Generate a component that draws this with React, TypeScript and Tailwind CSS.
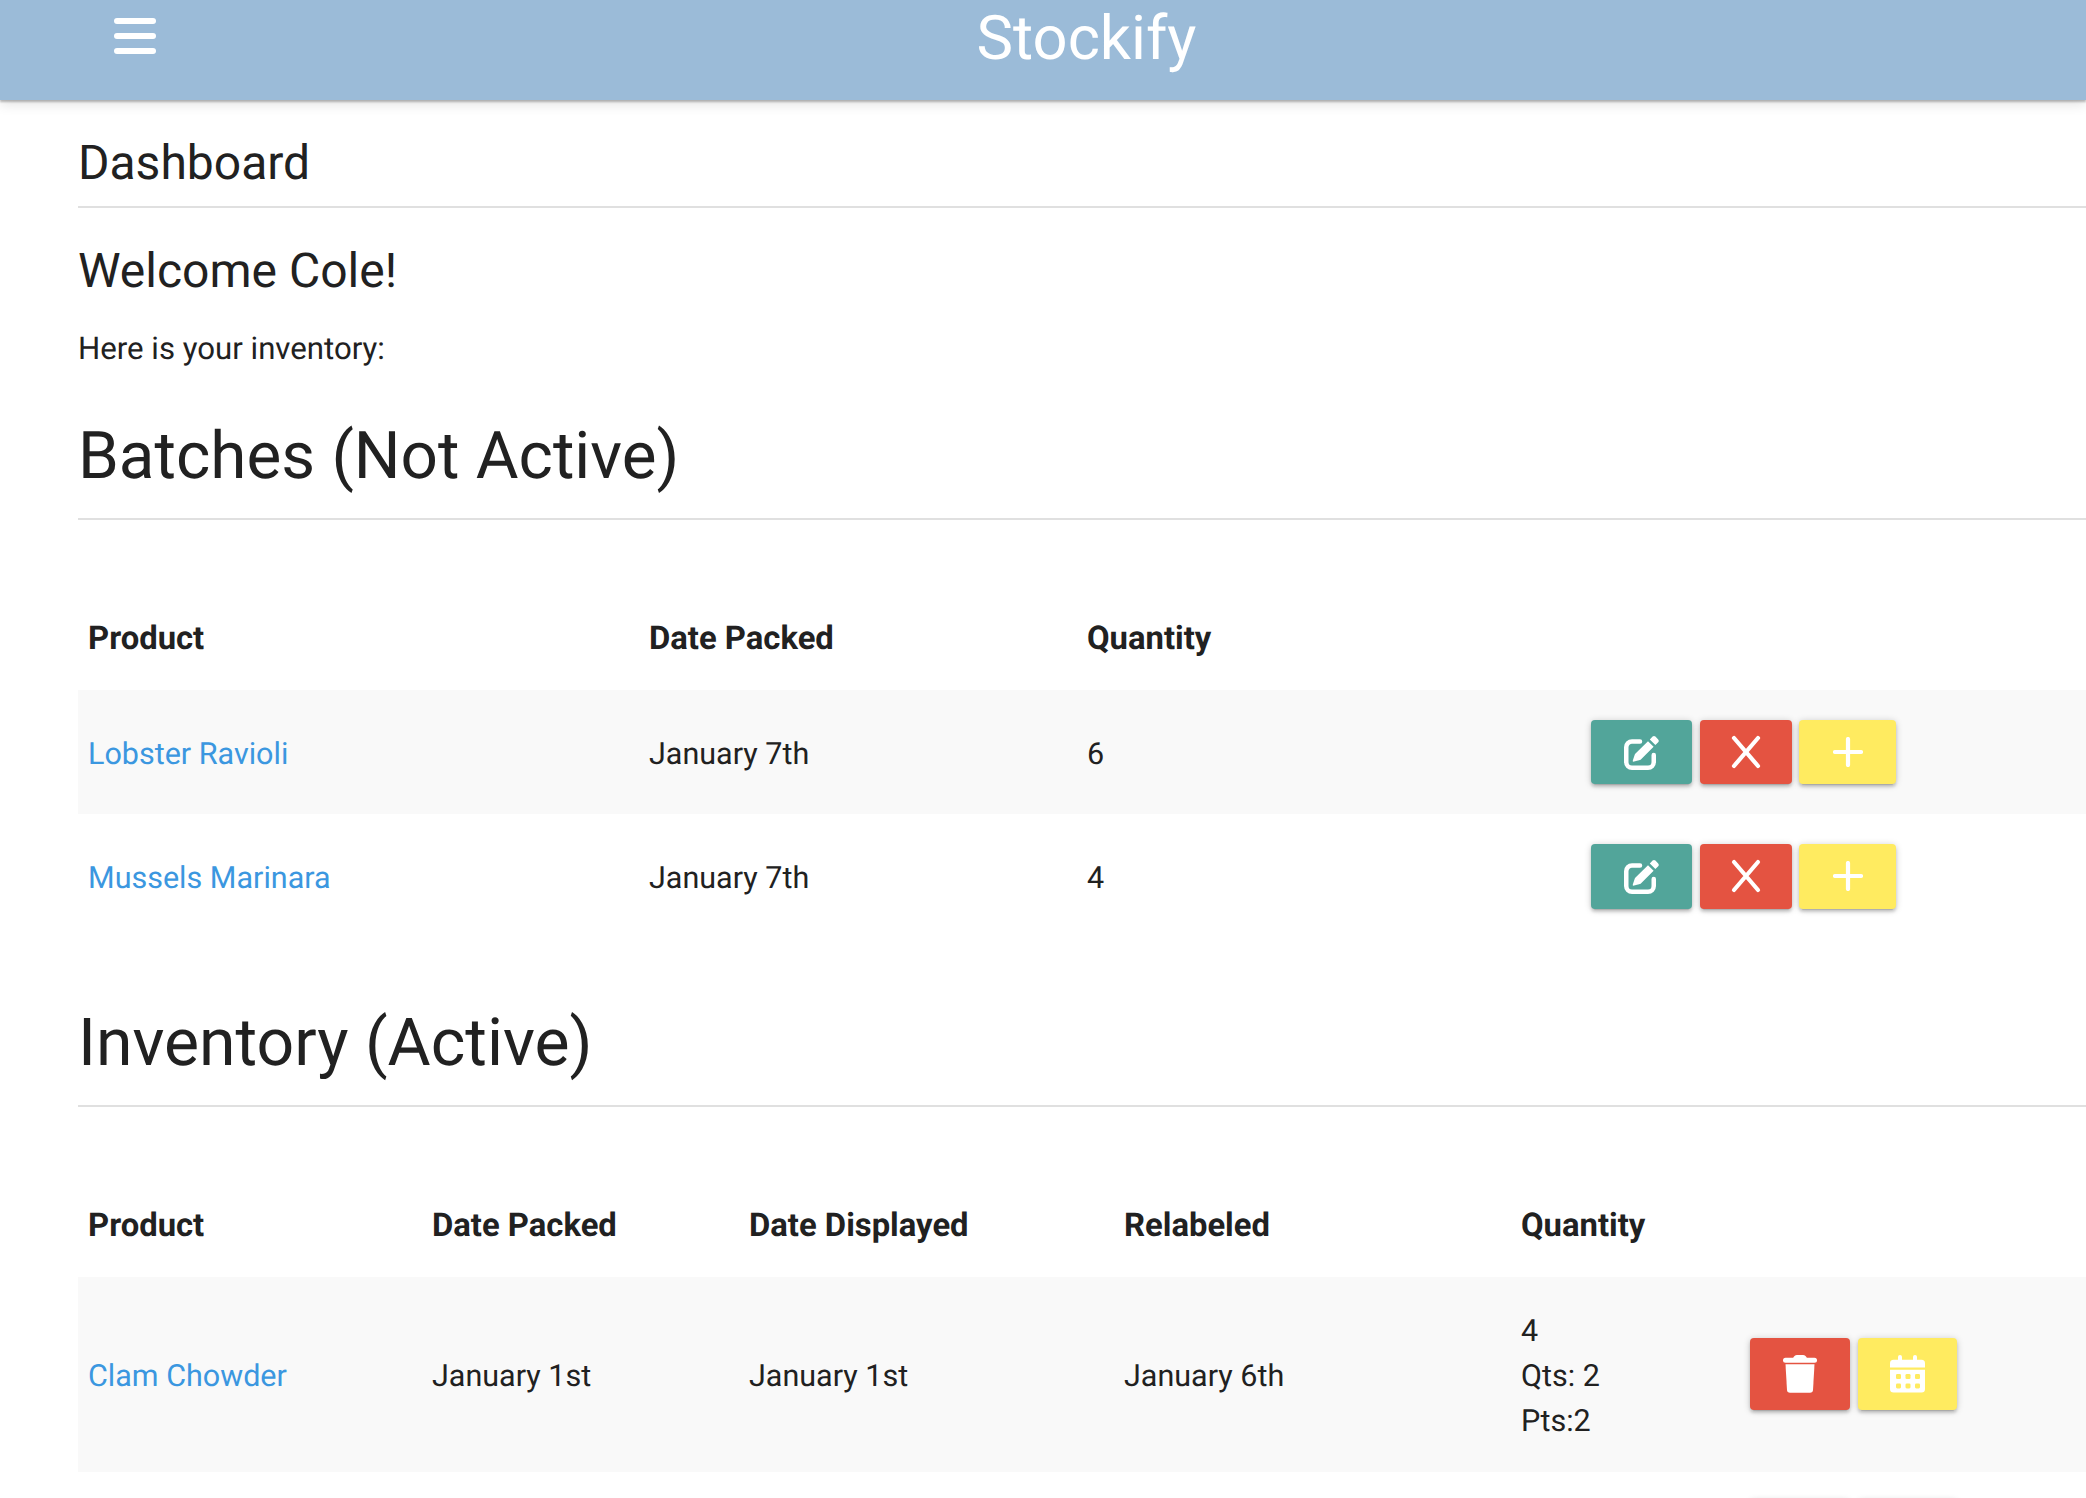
import React from "react";

const shadow = "shadow-[0_3px_3px_0_rgba(0,0,0,0.14),0_4px_1px_-3px_rgba(0,0,0,0.12),0_1px_7px_0_rgba(0,0,0,0.2)]";

function EditIcon() {
  return (
    <svg width="36" height="36" viewBox="0 0 36 36" fill="white">
      <path d="M16 7.5 H8 A5.75 5.75 0 0 0 2.25 13.25 V28 A5.75 5.75 0 0 0 8 33.75 H24 A5.75 5.75 0 0 0 29.75 28 V21" fill="none" stroke="white" strokeWidth="4.5" strokeLinecap="round" />
      <path d="M10 27.6 Q8.4 28 8.8 26.4 L10.8 20.6 Q11 20 11.5 19.5 L24 7.2 L29.6 12.8 L17.1 25.2 Q16.6 25.7 16 25.9 Z" />
      <path d="M25.8 5.4 L28.6 2.6 Q30 1.2 31.4 2.6 L34.2 5.4 Q35.6 6.8 34.2 8.2 L31.4 11 Z" />
    </svg>
  );
}
function XIcon() {
  return (
    <svg width="30" height="34" viewBox="0 0 30 34" fill="none" stroke="white" strokeWidth="4.2" strokeLinecap="round">
      <path d="M3 3 L27 31 M27 3 L3 31" />
    </svg>
  );
}
function PlusIcon() {
  return (
    <svg width="30" height="30" viewBox="0 0 30 30" fill="none" stroke="white" strokeWidth="4.2" strokeLinecap="round">
      <path d="M15 2 V28 M2 15 H28" />
    </svg>
  );
}
function TrashIcon() {
  return (
    <svg width="34" height="38" viewBox="0 0 34 38" fill="white">
      <rect x="0" y="2.7" width="34" height="5" rx="2.5" />
      <path d="M10 3.5 Q11 0 14 0 H20 Q23 0 24 3.5 Z" />
      <path d="M2.5 9.3 H31.5 L30 35 Q29.8 37.8 27 37.8 H7 Q4.2 37.8 4 35 Z" />
    </svg>
  );
}
function CalendarIcon() {
  return (
    <svg width="35" height="38" viewBox="0 0 35 38" fill="white">
      <rect x="8" y="0" width="4" height="7" rx="2" />
      <rect x="23" y="0" width="4" height="7" rx="2" />
      <path d="M3.5 4.7 H31.5 Q35 4.7 35 8.2 V12.4 H0 V8.2 Q0 4.7 3.5 4.7 Z" />
      <path d="M0 14.7 H35 V34 Q35 37.5 31.5 37.5 H3.5 Q0 37.5 0 34 Z" />
      <g fill="#ffeb60">
        <rect x="6" y="19" width="5" height="5" rx="1.3" />
        <rect x="15.5" y="19" width="5" height="5" rx="1.3" />
        <rect x="25" y="19" width="5" height="5" rx="1.3" />
        <rect x="6" y="28.4" width="5" height="5" rx="1.3" />
        <rect x="15.5" y="28.4" width="5" height="5" rx="1.3" />
        <rect x="25" y="28.4" width="5" height="5" rx="1.3" />
      </g>
    </svg>
  );
}

function Btn({ color, w, h, children }: { color: string; w: string; h: string; children?: React.ReactNode }) {
  return (
    <button className={`${color} ${w} ${h} ${shadow} rounded-[4px] flex items-center justify-center text-white shrink-0`}>
      {children}
    </button>
  );
}

function BatchActions({ h }: { h: string }) {
  return (
    <div className="flex gap-[7px] pl-[11px]">
      <Btn color="bg-[#52a59a]" w="w-[101px]" h={h}><EditIcon /></Btn>
      <Btn color="bg-[#e45341]" w="w-[92px] ml-[1px]" h={h}><XIcon /></Btn>
      <Btn color="bg-[#ffeb60]" w="w-[97px]" h={h}><PlusIcon /></Btn>
    </div>
  );
}

const th = "text-left font-bold px-[10px] pt-[5px] align-middle text-[32.8px]";
const td = "px-[10px] align-middle";
const tx = "px-[10px] pt-[6px] align-middle text-[30.5px]";
const tx2 = "px-[10px] pt-[4px] align-middle text-[30.5px]";
const link = "text-[#3b97e0]";

export default function App() {
  return (
    <div className="h-[1498px] overflow-hidden bg-white text-[#212121] text-[31.2px] [text-rendering:geometricPrecision] font-['Roboto',sans-serif]">
      <header className="relative h-[100px] bg-[#9bbbd8] shadow-[0_2px_2px_0_rgba(0,0,0,0.25),0_4px_12px_0_rgba(0,0,0,0.12)] flex justify-center">
        <svg className="absolute left-[114px] top-[18px]" width="42" height="36" viewBox="0 0 42 36" fill="white">
          <rect x="0" y="0" width="42" height="6" rx="3" />
          <rect x="0" y="15" width="42" height="6" rx="3" />
          <rect x="0" y="30" width="42" height="6" rx="3" />
        </svg>
        <span className="text-white text-[61.5px] leading-[78px] ml-[87px]">Stockify</span>
      </header>

      <main className="pl-[78px]">
        <div className="h-[108px] border-b-2 border-[#e0e0e0] flex items-end pb-[13px]">
          <h1 className="text-[48px] leading-[60px]">Dashboard</h1>
        </div>
        <h2 className="text-[48px] leading-[60px] mt-[33px]">Welcome Cole!</h2>
        <p className="leading-[45px] mt-[25px]">Here is your inventory:</p>

        <div className="h-[149px] border-b-2 border-[#e0e0e0] flex items-end pb-[21px]">
          <h2 className="text-[65.6px] leading-[80px]">Batches (Not Active)</h2>
        </div>

        <table className="w-full table-fixed border-collapse mt-[64px]">
          <colgroup>
            <col className="w-[561px]" />
            <col className="w-[438px]" />
            <col className="w-[493px]" />
            <col />
          </colgroup>
          <thead>
            <tr className="h-[106px]">
              <th className={th}>Product</th>
              <th className={th}>Date Packed</th>
              <th className={th}>Quantity</th>
              <th className={th}></th>
            </tr>
          </thead>
          <tbody>
            <tr className="h-[124px] bg-[#f9f9f9]">
              <td className={`${tx} ${link}`}>Lobster Ravioli</td>
              <td className={tx}>January 7th</td>
              <td className={tx}>6</td>
              <td className={td}><BatchActions h="h-[64px]" /></td>
            </tr>
            <tr className="h-[124px]">
              <td className={`${tx} ${link}`}>Mussels Marinara</td>
              <td className={tx}>January 7th</td>
              <td className={tx}>4</td>
              <td className={td}><BatchActions h="h-[65px]" /></td>
            </tr>
          </tbody>
        </table>

        <div className="h-[169px] border-b-2 border-[#e0e0e0] flex items-end pb-[21px]">
          <h2 className="text-[66.1px] leading-[80px]">Inventory (Active)</h2>
        </div>

        <table className="w-full table-fixed border-collapse mt-[65px]">
          <colgroup>
            <col className="w-[344px]" />
            <col className="w-[317px]" />
            <col className="w-[375px]" />
            <col className="w-[397px]" />
            <col className="w-[228px]" />
            <col />
          </colgroup>
          <thead>
            <tr className="h-[105px]">
              <th className={th}>Product</th>
              <th className={th}>Date Packed</th>
              <th className={th}>Date Displayed</th>
              <th className={th}>Relabeled</th>
              <th className={th}>Quantity</th>
              <th className={th}></th>
            </tr>
          </thead>
          <tbody>
            <tr className="h-[195px] bg-[#f9f9f9]">
              <td className={`${tx2} ${link}`}>Clam Chowder</td>
              <td className={tx2}>January 1st</td>
              <td className={tx2}>January 1st</td>
              <td className={tx2}>January 6th</td>
              <td className={`${tx2} leading-[45px]`}>4<br />Qts: 2<br />Pts:2</td>
              <td className={td}>
                <div className="flex gap-[8px] pl-[1px] pb-[2px]">
                  <Btn color="bg-[#e45341]" w="w-[100px]" h="h-[72px]"><TrashIcon /></Btn>
                  <Btn color="bg-[#ffeb60]" w="w-[99px]" h="h-[72px]"><CalendarIcon /></Btn>
                </div>
              </td>
            </tr>
            <tr>
              <td colSpan={5}></td>
              <td className={td}>
                <div className="flex gap-[8px] pl-[1px] pt-[28px]">
                  <Btn color="bg-[#e45341]" w="w-[100px]" h="h-[72px]" />
                  <Btn color="bg-[#ffeb60]" w="w-[99px]" h="h-[72px]" />
                </div>
              </td>
            </tr>
          </tbody>
        </table>
      </main>
    </div>
  );
}
